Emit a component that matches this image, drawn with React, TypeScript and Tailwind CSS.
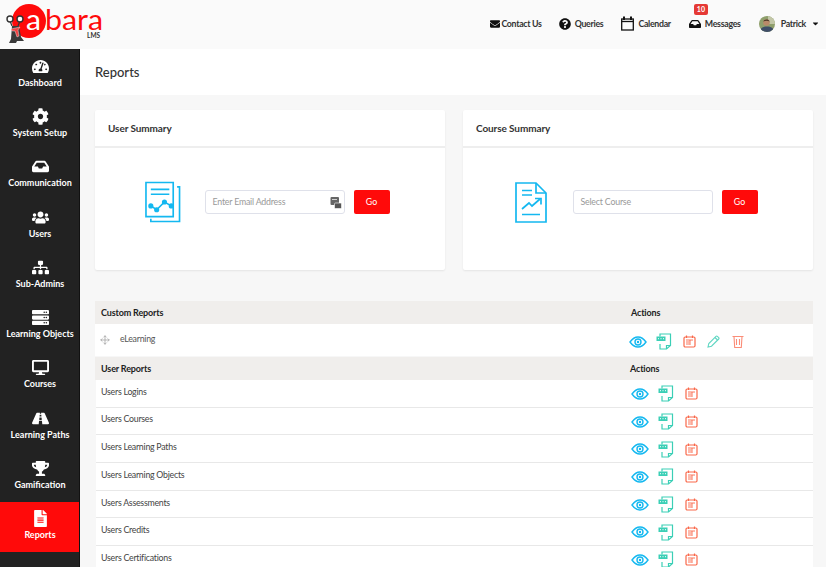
import { FaTachometerAlt, FaCog, FaInbox, FaUsers, FaSitemap, FaServer, FaDesktop, FaRoad, FaTrophy, FaFileAlt, FaEnvelope, FaQuestionCircle, FaCaretDown } from 'react-icons/fa'
import { Move } from 'lucide-react'

const nav = [
  { label: 'Dashboard', icon: FaTachometerAlt },
  { label: 'System Setup', icon: FaCog },
  { label: 'Communication', icon: FaInbox },
  { label: 'Users', icon: FaUsers },
  { label: 'Sub-Admins', icon: FaSitemap },
  { label: 'Learning Objects', icon: FaServer },
  { label: 'Courses', icon: FaDesktop },
  { label: 'Learning Paths', icon: FaRoad },
  { label: 'Gamification', icon: FaTrophy },
  { label: 'Reports', icon: FaFileAlt, active: true },
]

const userReports = ['Users Logins', 'Users Courses', 'Users Learning Paths', 'Users Learning Objects', 'Users Assessments', 'Users Credits', 'Users Certifications']

function Logo() {
  return (
    <svg width="110" height="49" viewBox="0 0 110 49" className="shrink-0">
      <circle cx="29" cy="22" r="17" fill="#ff0a0a" />
      <text x="26" y="30.500" textLength="15" lengthAdjust="spacingAndGlyphs" fontFamily="Lato, sans-serif" fontSize="29" fill="#fff">a</text>
      <text x="45" y="30.500" textLength="58" lengthAdjust="spacingAndGlyphs" fontFamily="Lato, sans-serif" fontSize="29" fill="#ff0a0a">bara</text>
      <text x="87" y="38.500" fontFamily="Lato, sans-serif" fontSize="6.500" fontWeight="700" fill="#333">LMS</text>
      <path d="M12 27 L10 22 M18 27 L20 22" stroke="#333" strokeWidth="1.200" />
      <circle cx="10" cy="20" r="3" fill="#fff" stroke="#333" strokeWidth="1.400" />
      <circle cx="20" cy="20" r="3" fill="#fff" stroke="#333" strokeWidth="1.400" />
      <path d="M12 27 h7 l2 11 l3 4 h-7 l-1 2 h-7 l2 -4 z" fill="#3a3a3a" />
      <path d="M11 30 l9 -2 l-2 3 l1 6 l-2 1 l-2 -6 l-3 0 z" fill="#ef4444" stroke="#fff" strokeWidth="0.400" />
    </svg>
  )
}

function TopLink({ icon, label, gap }: { icon: React.ReactNode; label: string; gap: string }) {
  return (
    <div className={`flex items-center text-[8.800px] font-bold tracking-[-0.300px] text-[#333] ${gap}`}>
      {icon}
      <span>{label}</span>
    </div>
  )
}

function CalendarIcon() {
  return (
    <svg width="13" height="15" viewBox="0 0 13 15" fill="none" stroke="#111" strokeWidth="1.300">
      <rect x="0.700" y="3" width="11.600" height="11" />
      <path d="M0.700 5.500h11.600" />
      <path d="M3 0.500v3.500M10 0.500v3.500" strokeWidth="2" />
    </svg>
  )
}

function Avatar() {
  return (
    <svg width="16" height="16" viewBox="0 0 16 16" className="mr-[6px]">
      <clipPath id="avatar-clip"><circle cx="8" cy="8" r="8" /></clipPath>
      <g clipPath="url(#avatar-clip)">
        <rect width="16" height="16" fill="#8f9f6c" />
        <rect x="9" width="7" height="8" fill="#c3c7a8" />
        <path d="M1 16c0-4 3-5.500 7-5.500s7 1.500 7 5.500z" fill="#3f4e68" />
        <circle cx="7.500" cy="6.500" r="3.300" fill="#b98a6a" />
        <path d="M4.300 5.500c.5-2.500 5.500-3 6.300 0-2-1-4-1-6.300 0z" fill="#4a3527" />
      </g>
    </svg>
  )
}

function EyeIcon() {
  return (
    <svg width="18" height="12" viewBox="0 0 18 12" fill="none" stroke="#14b8f0" strokeWidth="1.400">
      <path d="M1 6C3.500 2.500 6 1 9 1s5.500 1.500 8 5c-2.500 3.500-5 5-8 5S3.500 9.500 1 6z" />
      <circle cx="9" cy="6" r="3" />
      <circle cx="9" cy="6" r="1.200" fill="#14b8f0" stroke="none" />
    </svg>
  )
}

function CsvIcon() {
  return (
    <svg width="16" height="17" viewBox="0 0 16 17" fill="none" stroke="#3bcfb6" strokeWidth="1.200">
      <path d="M4 3.500V1h10.500v11.500L10.500 16H4v-5" />
      <path d="M10.500 16v-3.500h4" />
      <rect x="0.500" y="3.500" width="9" height="4.500" fill="#3bcfb6" stroke="none" />
      <path d="M2 5.700h1M4.500 5.700h1M7 5.700h1" stroke="#fff" strokeWidth="1" />
    </svg>
  )
}

function ScheduleIcon() {
  return (
    <svg width="13" height="13" viewBox="0 0 13 13" fill="none" stroke="#f9684a" strokeWidth="1.200">
      <rect x="1" y="2" width="11" height="10" rx="1.200" />
      <path d="M3.500 0.500v2.500M9.500 0.500v2.500" />
      <path d="M3 5h7M3 7h3.500M3 9h3.500M7 5v5" strokeWidth="0.900" />
    </svg>
  )
}

function PencilIcon() {
  return (
    <svg width="13" height="13" viewBox="0 0 13 13" fill="none" stroke="#5fd6c2" strokeWidth="1.100">
      <path d="M1 12l0.800-3.500L9 1.300a1 1 0 0 1 1.400 0l1.300 1.300a1 1 0 0 1 0 1.400L4.500 11.200z" />
      <path d="M8 2.500l2.500 2.500" />
    </svg>
  )
}

function TrashIcon() {
  return (
    <svg width="12" height="13" viewBox="0 0 12 13" fill="none" stroke="#fb8d78" strokeWidth="1.100">
      <path d="M0.500 1.500h11M2 1.500l0.700 11h6.600l0.700-11" />
      <path d="M4.500 4v6M7.500 4v6" />
    </svg>
  )
}

function SummaryCard({ title, icon, placeholder, trailing }: { title: string; icon: React.ReactNode; placeholder: string; trailing?: React.ReactNode }) {
  return (
    <div className="h-[160px] flex-1 rounded-[2px] bg-white shadow-[0_1px_2px_rgba(0,0,0,0.08)]">
      <div className="flex h-[38px] items-center border-b-2 border-[#eeeeee] pl-[13px] text-[10px] font-bold tracking-[-0.100px] text-[#333]">{title}</div>
      <div className="flex h-[122px] items-center justify-center pb-[14px] pr-[6px]">
        <div className="mr-[24px] flex w-[36px] justify-center">{icon}</div>
        <div className="flex h-[24px] w-[140px] items-center justify-between rounded-[3px] border border-[#dfe1ea] pl-[7px] pr-[2px] text-[8.800px] tracking-[-0.200px] text-[#999]">
          <span>{placeholder}</span>
          {trailing}
        </div>
        <button className="ml-[9px] h-[24px] w-[36px] rounded-[2px] bg-[#ff0a0a] text-[8.800px] text-white">Go</button>
      </div>
    </div>
  )
}

function HeaderRow({ title, actionsWidth }: { title: string; actionsWidth: string }) {
  return (
    <div className="flex h-[23px] items-center bg-[#f0eeec] pt-[1px] text-[9px] font-bold tracking-[-0.150px] text-[#222]">
      <div className={`pl-[6px] ${actionsWidth}`}>{title}</div>
      <div>Actions</div>
    </div>
  )
}

export default function App() {
  return (
    <div className="flex h-[567px] w-[826px] flex-col overflow-hidden bg-[#f7f7f7]" style={{ fontFamily: 'Lato, sans-serif' }}>
      <header className="flex h-[49px] shrink-0 items-center bg-[#fafafa] pb-[2px] pr-[6px]">
        <Logo />
        <div className="ml-auto flex items-center text-[#111]">
          <TopLink gap="gap-[1px]" icon={<FaEnvelope size={10} className="text-[#111]" />} label="Contact Us" />
          <div className="ml-[17px]"><TopLink gap="gap-[4px]" icon={<FaQuestionCircle size={12} className="text-[#111]" />} label="Queries" /></div>
          <div className="ml-[18px]"><TopLink gap="gap-[4px]" icon={<CalendarIcon />} label="Calendar" /></div>
          <div className="relative ml-[18px]">
            <TopLink gap="gap-[4px]" icon={<FaInbox size={12} className="text-[#111]" />} label="Messages" />
            <span className="absolute -top-[13px] left-[5px] rounded-[2px] bg-[#e53935] px-[3px] text-[7px] font-bold leading-[11px] text-white">10</span>
          </div>
          <div className="ml-[18px] flex items-center text-[8.800px] font-bold tracking-[-0.300px] text-[#333]">
            <Avatar />
            <span>Patrick</span>
            <FaCaretDown size={9} className="ml-[5px] text-[#111]" />
          </div>
        </div>
      </header>
      <div className="flex min-h-0 flex-1">
        <aside className="w-[80px] shrink-0 border-r border-[#111] bg-[#222222]">
          {nav.map((item) => {
            const Icon = item.icon
            return (
              <div key={item.label} className={`flex h-[50.300px] flex-col items-center justify-center pb-[2px] pl-[1px] text-[9px] font-bold text-white ${item.active ? 'bg-[#ff0a0a]' : ''}`}>
                <Icon size={17} />
                <span className="mt-[1px] whitespace-nowrap leading-[13px]">{item.label}</span>
              </div>
            )
          })}
        </aside>
        <main className="min-w-0 flex-1">
          <div className="flex h-[46px] items-center bg-white pl-[15px] pt-[1px] text-[13px] font-medium text-[#333]">Reports</div>
          <div className="flex gap-[18px] pl-[15px] pr-[13px] pt-[15px]">
            <SummaryCard
              title="User Summary"
              placeholder="Enter Email Address"
              trailing={<svg width="12" height="13" viewBox="0 0 12 13"><rect x="0.500" y="1" width="8.500" height="8" rx="1" fill="#666" /><rect x="4.500" y="7" width="7" height="5.500" rx="1" fill="#555" stroke="#fff" strokeWidth="0.600" /><path d="M2 3.500h5" stroke="#fff" strokeWidth="0.700" /></svg>}
              icon={
                <svg width="37" height="42" viewBox="0 0 37 42" fill="none" stroke="#14b8f0" strokeWidth="1.700">
                  <path d="M1 1h28v35H1z" />
                  <path d="M33 5.500h2.500V41H6v-2.800" />
                  <path d="M6 8h19M6 13h19" />
                  <path d="M6 25l6 4 8-8 7 4" />
                  <circle cx="6" cy="25" r="1.800" fill="#14b8f0" />
                  <circle cx="12" cy="29" r="1.800" fill="#14b8f0" />
                  <circle cx="20" cy="21" r="1.800" fill="#14b8f0" />
                  <circle cx="27" cy="25" r="1.800" fill="#14b8f0" />
                </svg>
              }
            />
            <SummaryCard
              title="Course Summary"
              placeholder="Select Course"
              icon={
                <svg width="32" height="41" viewBox="0 0 32 41" fill="none" stroke="#14b8f0" strokeWidth="1.700">
                  <path d="M1 1h20l10 10v29H1z" />
                  <path d="M21 1v10h10" />
                  <path d="M7 8.500h10M7 13h10M7 32.500h18" />
                  <path d="M7 27l7-6 3 3 8-7" />
                  <path d="M20 16.500h6v6" />
                </svg>
              }
            />
          </div>
          <div className="ml-[15px] mr-[13px] mt-[31px]">
            <HeaderRow title="Custom Reports" actionsWidth="w-[536px]" />
            <div className="flex h-[32px] items-center bg-white text-[8.800px] tracking-[-0.250px] text-[#555]">
              <Move size={10} className="ml-[5px] text-[#aaa]" />
              <span className="ml-[10px] w-[509px] -translate-y-[1px]">eLearning</span>
              <div className="flex items-center gap-[9px] pt-[3px]">
                <EyeIcon />
                <CsvIcon />
                <span className="ml-[2px]"><ScheduleIcon /></span>
                <span className="ml-[2px]"><PencilIcon /></span>
                <span className="ml-[3px]"><TrashIcon /></span>
              </div>
            </div>
            <div className="mt-[1px]">
              <HeaderRow title="User Reports" actionsWidth="w-[535px]" />
            </div>
            {userReports.map((name) => (
              <div key={name} className="ml-[1px] flex h-[27.700px] items-center border-b border-[#e8e8e8] bg-white text-[8.800px] tracking-[-0.250px] text-[#444]">
                <span className="w-[534.500px] -translate-y-[2px] pl-[5px]">{name}</span>
                <div className="flex items-center gap-[9px] pt-[1px]">
                  <EyeIcon />
                  <CsvIcon />
                  <span className="ml-[2px]"><ScheduleIcon /></span>
                </div>
              </div>
            ))}
          </div>
        </main>
      </div>
    </div>
  )
}
